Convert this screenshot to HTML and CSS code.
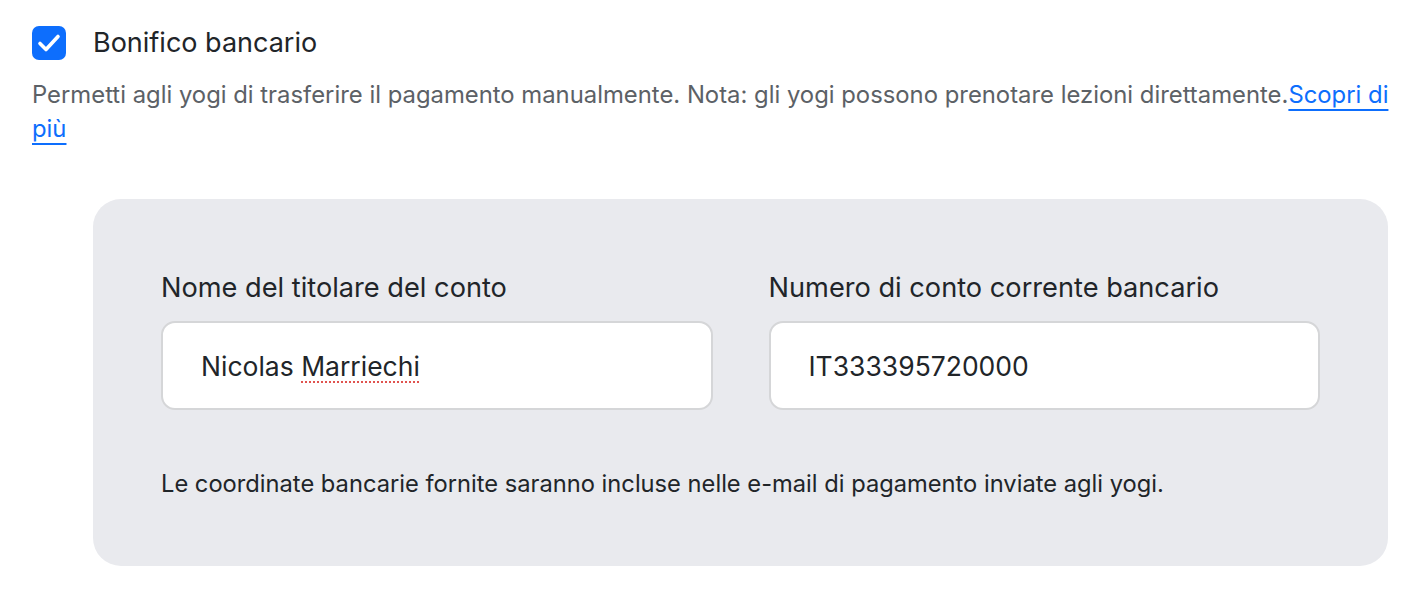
FILE: index.html
```html
<!DOCTYPE html>
<html lang="it">
<head>
<meta charset="utf-8">
<link rel="stylesheet" href="styles.css">
</head>
<body>
<div class="page">
  <label class="check-row">
    <span class="checkbox">
      <svg viewBox="0 0 34 34" width="34" height="34"><path d="M8 17.5l6 6L26 10.5" fill="none" stroke="#fff" stroke-width="3.6" stroke-linecap="round" stroke-linejoin="round"/></svg>
    </span>
    <span class="check-title">Bonifico bancario</span>
  </label>
  <p class="desc">Permetti agli yogi di trasferire il pagamento manualmente. Nota: gli yogi possono prenotare lezioni direttamente.<a class="link" href="#">Scopri di più</a></p>
  <div class="card">
    <div class="fields">
      <div class="field">
        <div class="label">Nome del titolare del conto</div>
        <div class="input"><span class="value">Nicolas <span class="spell">Marriechi</span></span></div>
      </div>
      <div class="field">
        <div class="label">Numero di conto corrente bancario</div>
        <div class="input"><span class="value">IT333395720000</span></div>
      </div>
    </div>
    <p class="note">Le coordinate bancarie fornite saranno incluse nelle e-mail di pagamento inviate agli yogi.</p>
  </div>
</div>
</body>
</html>
```
FILE: styles.css
```css
html, body {
  margin: 0;
  padding: 0;
  background: #ffffff;
}
body {
  font-family: Inter, "Noto Sans", sans-serif;
  color: #212529;
}
.page {
  padding: 26px 32px 0 32px;
}
.check-row {
  display: flex;
  align-items: center;
  gap: 27px;
  height: 34px;
}
.checkbox {
  width: 34px;
  height: 34px;
  border-radius: 7px;
  background: #0d6efd;
  display: flex;
  align-items: center;
  justify-content: center;
}
.checkbox svg { display: block; }
.check-title {
  font-size: 27px;
  line-height: 34px;
  color: #212529;
}
.desc {
  margin: 18px 0 0 0;
  font-size: 23.85px;
  line-height: 34px;
  color: #5c6166;
  width: 1360px;
}
.link {
  color: #0d6efd;
  text-decoration: underline;
  text-decoration-thickness: 2px;
  text-underline-offset: 6px;
}
.card {
  margin: 53px 0 0 61px;
  background: #e9eaee;
  border-radius: 28px;
  padding: 71px 68px 66px 68px;
}
.fields {
  display: grid;
  grid-template-columns: 1fr 1fr;
  column-gap: 56px;
}
.label {
  font-size: 27.2px;
  line-height: 36px;
  color: #212529;
}
.input {
  margin-top: 15px;
  height: 89px;
  box-sizing: border-box;
  background: #fff;
  border: 2px solid #d5d6d8;
  border-radius: 14px;
  display: flex;
  align-items: center;
  padding-left: 38px;
}
.value {
  font-size: 26.5px;
  color: #212529;
}
.spell {
  text-decoration: underline dotted #e0534f;
  text-decoration-thickness: 2px;
  text-underline-offset: 6px;
}
.note {
  margin: 58px 0 0 0;
  font-size: 23.7px;
  line-height: 32px;
  color: #212529;
}
```
